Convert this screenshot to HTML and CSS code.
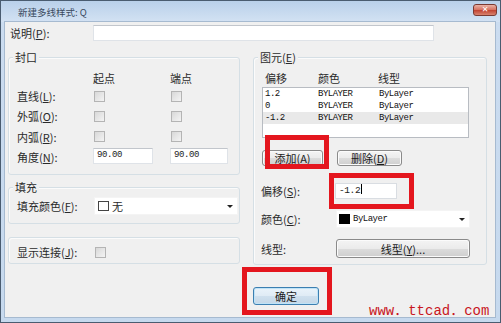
FILE: index.html
```html
<!DOCTYPE html>
<html lang="zh-CN">
<head>
<meta charset="utf-8">
<title>新建多线样式</title>
<link rel="stylesheet" href="styles.css">
</head>
<body>
<div class="win">
  <div class="titlebar">
    <span class="title">新建多线样式: Q</span>
    <span class="close">✕</span>
  </div>
  <div class="client">
    <div class="desc-row">
      <span class="lbl desc-lbl">说明(<u>P</u>):</span>
      <span class="textbox desc-input"></span>
    </div>
    <div class="main">
      <div class="leftcol">
        <div class="group g-caps">
          <span class="gcap">封口</span>
          <div class="caps-grid">
            <span></span><span class="lbl">起点</span><span class="lbl">端点</span>
            <span class="lbl">直线(<u>L</u>):</span><span class="chk"></span><span class="chk"></span>
            <span class="lbl">外弧(<u>O</u>):</span><span class="chk"></span><span class="chk"></span>
            <span class="lbl">内弧(<u>R</u>):</span><span class="chk"></span><span class="chk"></span>
            <span class="lbl">角度(<u>N</u>):</span><span class="textbox angle a1">90.00</span><span class="textbox angle a2">90.00</span>
          </div>
        </div>
        <div class="group g-fill">
          <span class="gcap">填充</span>
          <div class="frow">
            <span class="lbl w76">填充颜色(<u>F</u>):</span>
            <div class="combo fill-combo"><span class="swatch empty"></span><span class="lbl">无</span><span class="arrow"></span></div>
          </div>
        </div>
        <div class="group g-join">
          <span class="lbl w76">显示连接(<u>J</u>):</span><span class="chk"></span>
        </div>
      </div>
      <div class="group g-elem">
        <span class="gcap">图元(<u>E</u>)</span>
        <div class="list-head"><span class="lbl">偏移</span><span class="lbl">颜色</span><span class="lbl">线型</span></div>
        <div class="listbox">
          <div class="lrow"><span>1.2</span><span>BYLAYER</span><span>ByLayer</span></div>
          <div class="lrow"><span>0</span><span>BYLAYER</span><span>ByLayer</span></div>
          <div class="lrow sel"><span>-1.2</span><span>BYLAYER</span><span>ByLayer</span></div>
        </div>
        <div class="btn-row">
          <span class="btn b-add">添加(<u>A</u>)</span>
          <span class="btn b-del">删除(<u>D</u>)</span>
        </div>
        <div class="prop-grid">
          <span class="lbl">偏移(<u>S</u>):</span>
          <span class="textbox offset">-1.2<span class="caret"></span></span>
          <span class="lbl">颜色(<u>C</u>):</span>
          <div class="combo color-combo"><span class="swatch black"></span><span class="mono">ByLayer</span><span class="arrow"></span></div>
          <span class="lbl">线型:</span>
          <span class="btn b-lt">线型(<u>Y</u>)...</span>
        </div>
      </div>
    </div>
    <div class="footer">
      <span class="btn default b-ok">确定</span>
    </div>
  </div>
  <div class="mark m1"></div>
  <div class="mark m2"></div>
  <div class="mark m3"></div>
  <div class="watermark">www．ttcad．com</div>
</div>
</body>
</html>
```
FILE: styles.css
```css
* { box-sizing: border-box; }
html, body { margin: 0; padding: 0; }
body {
  width: 501px;
  height: 323px;
  overflow: hidden;
  font-family: "Noto Sans CJK SC", "Liberation Sans", sans-serif;
  font-size: 11px;
  color: #2a2a2a;
  background: #fff;
}
u { text-decoration: underline; text-underline-offset: 1px; }

.win {
  position: relative;
  width: 501px;
  height: 323px;
  border: 1px solid #4a5c70;
  padding: 0 5px 5px 4px;
  background: linear-gradient(#bcd2ec, #cbdcf0 21px, #c6d9ee);
  display: flex;
  flex-direction: column;
}

.titlebar {
  height: 21px;
  display: flex;
  align-items: center;
  background: linear-gradient(#b9d0ea, #d3e2f3);
  margin: 0 -5px 0 -4px;
  padding-right: 3px;
  padding-left: 17px;
}
.title {
  font-size: 9.5px;
  color: #3a4a5e;
  line-height: 12px;
}
.close {
  margin-left: auto;
  align-self: flex-start;
  margin-top: 3px;
  width: 24px;
  height: 12px;
  border: 1px solid #7a3a32;
  border-radius: 3px;
  background: linear-gradient(#eab2a6, #d6705f 50%, #c0402e 51%, #d8836f);
  color: #fff;
  font-family: "DejaVu Sans", sans-serif;
  font-size: 8px;
  font-weight: bold;
  line-height: 10px;
  text-align: center;
}

.client {
  flex: 1;
  background: #f0f0f0;
  box-shadow: 0 0 0 1px #a6bad0;
  position: relative;
}

.lbl { line-height: 14px; white-space: nowrap; }
.mono {
  font-family: "Liberation Mono", monospace;
  font-size: 9px;
  letter-spacing: -0.5px;
}

.desc-row {
  display: flex;
  align-items: center;
  height: 16px;
  margin-top: 3px;
  padding-left: 5px;
}
.desc-lbl { width: 83px; }

.textbox {
  display: block;
  height: 16px;
  background: #fff;
  border: 1px solid #dfe3e8;
  border-top-color: #c2c6cc;
  font-family: "Liberation Mono", monospace;
  font-size: 9px;
  letter-spacing: -0.4px;
  line-height: 13px;
  padding-left: 3px;
  color: #222;
}
.desc-input { width: 341px; }

.main {
  display: grid;
  grid-template-columns: 232px 234px;
  column-gap: 13px;
  margin: 16px 0 0 3px;
  align-items: start;
}
.leftcol { display: flex; flex-direction: column; }

.group {
  position: relative;
  border: 1px solid #d5dfe5;
  border-radius: 3px;
  box-shadow: inset 1px 1px 0 #fbfbfb;
}
.gcap {
  position: absolute;
  left: 4px;
  top: -8px;
  padding: 0 2px;
  background: #f0f0f0;
  line-height: 14px;
  white-space: nowrap;
}

.g-caps { height: 118px; padding: 12px 0 0 8px; }
.caps-grid {
  display: grid;
  grid-template-columns: 76px 77px 60px;
  grid-template-rows: 16px 20px 20px 21px 20px;
  align-items: center;
}
.chk {
  display: block;
  width: 11px;
  height: 11px;
  margin-left: 1px;
  border: 1px solid #b4b4b4;
  background: linear-gradient(135deg, #d8d8d8, #f4f4f4);
}
.angle { width: 60px; align-self: start; margin-top: 1px; }
.a2 { width: 58px; }

.g-fill { margin-top: 12px; height: 37px; padding: 9px 0 0 8px; }
.frow { display: flex; align-items: center; }
.w76 { width: 77px; }

.combo {
  position: relative;
  display: flex;
  align-items: center;
  height: 18px;
  background: #fff;
  border: 1px solid #f4f4f4;
}
.fill-combo { width: 144px; padding-left: 3px; }
.swatch { display: block; width: 11px; height: 10px; margin-right: 3px; }
.swatch.empty { border: 1px solid #444; background: #fff; }
.swatch.black { background: #000; }
.arrow {
  margin-left: auto;
  margin-right: 4px;
  width: 0;
  height: 0;
  border-left: 3px solid transparent;
  border-right: 3px solid transparent;
  border-top: 3px solid #222;
}

.g-join {
  margin-top: 13px;
  height: 27px;
  padding: 3px 0 0 8px;
  display: flex;
  align-items: center;
}

.g-elem { height: 208px; padding: 13px 0 0 8px; }
.list-head {
  display: grid;
  grid-template-columns: 53px 60px 1fr;
  padding-left: 3px;
  height: 14px;
}
.listbox {
  margin-top: 2px;
  width: 207px;
  height: 51px;
  background: #fff;
  border: 1px solid #b8bcc2;
  padding-top: 0;
}
.lrow {
  display: grid;
  grid-template-columns: 53px 61px 1fr;
  height: 12px;
  line-height: 12px;
  padding-left: 2px;
  font-family: "Liberation Mono", monospace;
  font-size: 9px;
  letter-spacing: -0.5px;
  color: #111;
}
.lrow.sel { background: #e9e9e9; }

.btn {
  display: flex;
  align-items: center;
  justify-content: center;
  height: 16px;
  border: 1px solid #8a8a8a;
  border-radius: 3px;
  background: linear-gradient(#f4f4f4, #ebebeb 50%, #dcdcdc 51%, #cfcfcf);
  box-shadow: inset 0 0 0 1px #fbfbfb;
  line-height: 14px;
  white-space: nowrap;
  color: #1b1b1b;
}
.btn-row { display: flex; gap: 14px; margin-top: 12px; }
.b-add { width: 61px; }
.b-del { width: 65px; }

.prop-grid {
  display: grid;
  grid-template-columns: 75px 134px;
  grid-template-rows: 16px 18px 19px;
  row-gap: 11px;
  margin: 17px 0 0 -1px;
  align-items: center;
}
.offset {
  width: 62px;
  margin-left: -1px;
  border-color: #d9dde2;
  font-size: 9.5px;
}
.caret {
  display: inline-block;
  width: 1px;
  height: 10px;
  background: #000;
  vertical-align: -1px;
  margin-left: 1px;
}
.color-combo { width: 134px; padding-left: 2px; }
.color-combo .mono { color: #111; }
.b-lt { width: 134px; height: 19px; }

.footer { margin-top: 22px; padding-left: 248px; }
.b-ok {
  width: 66px;
  height: 18px;
  border-color: #3c7fb1;
  background: linear-gradient(#eaf3fa, #dfebf5 50%, #cfe0ee 51%, #c4d7e7);
  box-shadow: inset 0 0 0 1px #bfe3f7;
}

.mark {
  position: absolute;
  border: 5px solid #e4161e;
}
.m1 { left: 264px; top: 134px; width: 64px; height: 34px; }
.m2 { left: 328px; top: 172px; width: 85px; height: 36px; }
.m3 { left: 241px; top: 266px; width: 90px; height: 48px; }

.watermark {
  position: absolute;
  left: 368px;
  top: 302px;
  font-family: "Liberation Mono", "Noto Sans CJK SC", monospace;
  font-size: 14px;
  line-height: 16px;
  color: #c8161e;
  white-space: nowrap;
}
```
